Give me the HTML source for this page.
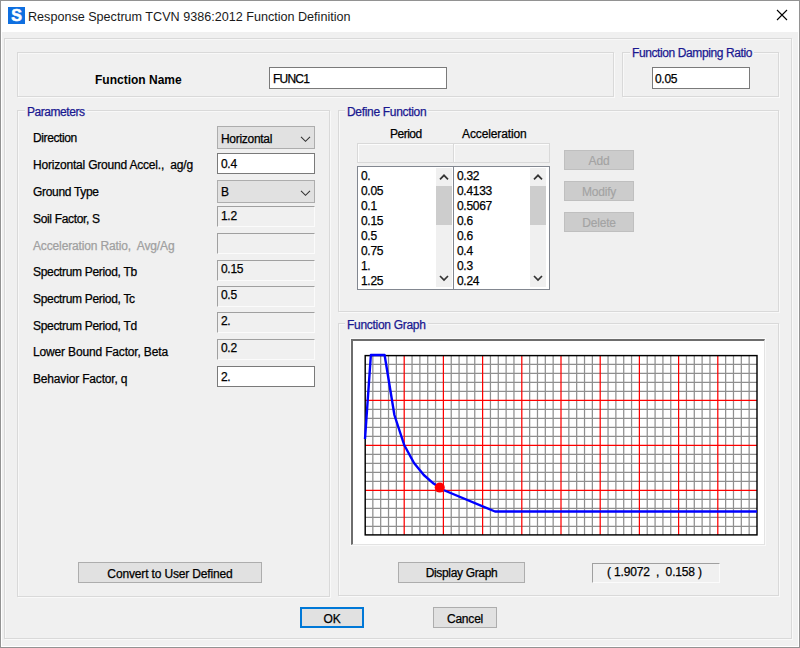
<!DOCTYPE html>
<html><head><meta charset="utf-8">
<style>
html,body{margin:0;padding:0;}
body{width:800px;height:648px;position:relative;overflow:hidden;background:#f0f0f0;font-family:"Liberation Sans",sans-serif;font-size:11px;color:#000;}
div,span{box-sizing:border-box;}
.a{position:absolute;}
.t{position:absolute;font-size:12px;line-height:13px;white-space:pre;letter-spacing:-0.3px;-webkit-text-stroke:0.25px currentColor;}
.win{left:0;top:0;width:800px;height:648px;border:1px solid #929292;background:#fff;}
.client{left:2px;top:32px;width:796px;height:614px;background:#f0f0f0;}
.etch{position:absolute;border:1px solid #d9d9d9;box-shadow:1px 1px 0 #f9f9f9, inset 1px 1px 0 #f8f8f8;}
.gt{position:absolute;font-size:12px;line-height:13px;white-space:pre;color:#1a1890;background:#f0f0f0;padding:0 2px;letter-spacing:-0.3px;-webkit-text-stroke:0.25px currentColor;}
.tb{position:absolute;background:#fff;border:1px solid #7a7a7a;}
.ro{position:absolute;background:#f0f0f0;border-top:1px solid #a0a0a0;border-left:1px solid #a0a0a0;border-right:1px solid #fbfbfb;border-bottom:1px solid #fbfbfb;}
.cb{position:absolute;background:#e1e1e1;border:1px solid #adadad;}
.btn{position:absolute;background:#e1e1e1;border:1px solid #adadad;text-align:center;font-size:12px;line-height:21px;white-space:pre;letter-spacing:-0.2px;-webkit-text-stroke:0.25px currentColor;}
.dis{background:#cccccc;border:1px solid #bfbfbf;color:#a3a3a3;-webkit-text-stroke:0.15px currentColor;}
</style></head><body>
<div class="a win"></div>
<div class="a client"></div>

<!-- title bar -->
<div class="a" style="left:8px;top:7px;width:17px;height:17px;background:#0f6fe0;"></div>
<div class="a" style="left:8px;top:6px;width:17px;height:17px;color:#fff;font-weight:bold;font-size:16px;line-height:20px;text-align:center;-webkit-text-stroke:0.6px #fff;">S</div>
<div class="t" style="left:28px;top:10px;-webkit-text-stroke:0;font-size:12.6px;line-height:15px;letter-spacing:0;color:#1a1a1a;">Response Spectrum TCVN 9386:2012 Function Definition</div>
<svg class="a" style="left:776px;top:9px" width="12" height="12" viewBox="0 0 12 12"><path d="M1 1L11 11M11 1L1 11" stroke="#000" stroke-width="1.1" fill="none"/></svg>

<!-- outer panel -->
<div class="etch" style="left:4px;top:38px;width:788px;height:601px;"></div>

<!-- Function name panel -->
<div class="etch" style="left:17px;top:52px;width:597px;height:45px;"></div>
<div class="t" style="left:95px;top:74px;font-size:12px;font-weight:bold;letter-spacing:0;-webkit-text-stroke:0;">Function Name</div>
<div class="tb" style="left:269px;top:67px;width:178px;height:22px;"></div>
<div class="t" style="left:273px;top:73px;letter-spacing:-0.8px;">FUNC1</div>

<!-- Damping -->
<div class="etch" style="left:622px;top:52px;width:157px;height:45px;"></div>
<div class="gt" style="left:630px;top:47px;letter-spacing:-0.4px;">Function Damping Ratio</div>
<div class="tb" style="left:652px;top:67px;width:98px;height:22px;"></div>
<div class="t" style="left:655px;top:73px;">0.05</div>

<!-- Parameters -->
<div class="etch" style="left:17px;top:110px;width:313px;height:487px;"></div>
<div class="gt" style="letter-spacing:-0.45px;left:25px;top:106px;">Parameters</div>

<div class="t" style="letter-spacing:-0.4px;left:33px;top:132px;">Direction</div>
<div class="t" style="letter-spacing:-0.2px;left:33px;top:159px;">Horizontal Ground Accel.,  ag/g</div>
<div class="t" style="letter-spacing:-0.32px;left:33px;top:186px;">Ground Type</div>
<div class="t" style="letter-spacing:-0.33px;left:33px;top:213px;">Soil Factor, S</div>
<div class="t" style="letter-spacing:-0.14px;left:33px;top:240px;color:#a0a0a0;">Acceleration Ratio,  Avg/Ag</div>
<div class="t" style="letter-spacing:-0.32px;left:33px;top:266px;">Spectrum Period, Tb</div>
<div class="t" style="letter-spacing:-0.32px;left:33px;top:293px;">Spectrum Period, Tc</div>
<div class="t" style="letter-spacing:-0.32px;left:33px;top:320px;">Spectrum Period, Td</div>
<div class="t" style="letter-spacing:-0.16px;left:33px;top:346px;">Lower Bound Factor, Beta</div>
<div class="t" style="letter-spacing:-0.17px;left:33px;top:373px;">Behavior Factor, q</div>

<div class="cb" style="left:217px;top:126px;width:98px;height:23px;"></div>
<div class="t" style="left:221px;top:133px;">Horizontal</div>
<svg class="a" style="left:300px;top:135px" width="11" height="8" viewBox="0 0 11 8"><path d="M1 1.8L5.5 6.3L10 1.8" stroke="#333" stroke-width="1.1" fill="none"/></svg>

<div class="tb" style="left:217px;top:153px;width:98px;height:21px;"></div>
<div class="t" style="left:221px;top:158px;">0.4</div>

<div class="cb" style="left:217px;top:180px;width:98px;height:23px;"></div>
<div class="t" style="left:221px;top:186px;">B</div>
<svg class="a" style="left:300px;top:189px" width="11" height="8" viewBox="0 0 11 8"><path d="M1 1.8L5.5 6.3L10 1.8" stroke="#333" stroke-width="1.1" fill="none"/></svg>

<div class="ro" style="left:217px;top:206px;width:98px;height:21px;"></div>
<div class="t" style="left:221px;top:210px;">1.2</div>
<div class="ro" style="left:217px;top:233px;width:98px;height:21px;"></div>
<div class="ro" style="left:217px;top:260px;width:98px;height:21px;"></div>
<div class="t" style="left:221px;top:263px;">0.15</div>
<div class="ro" style="left:217px;top:286px;width:98px;height:21px;"></div>
<div class="t" style="left:221px;top:289px;">0.5</div>
<div class="ro" style="left:217px;top:312px;width:98px;height:21px;"></div>
<div class="t" style="left:221px;top:315px;">2.</div>
<div class="ro" style="left:217px;top:339px;width:98px;height:21px;"></div>
<div class="t" style="left:221px;top:342px;">0.2</div>

<div class="tb" style="left:217px;top:366px;width:98px;height:21px;"></div>
<div class="t" style="left:221px;top:371px;">2.</div>

<div class="btn" style="letter-spacing:-0.15px;left:78px;top:562px;width:184px;height:21px;line-height:22px;">Convert to User Defined</div>

<!-- Define Function -->
<div class="etch" style="left:338px;top:110px;width:441px;height:202px;"></div>
<div class="gt" style="letter-spacing:-0.32px;left:345px;top:106px;">Define Function</div>

<div class="t" style="letter-spacing:-0.5px;left:390px;top:128px;">Period</div>
<div class="t" style="letter-spacing:-0.12px;left:462px;top:128px;">Acceleration</div>

<div class="a" style="left:357px;top:143px;width:97px;height:20px;border:1px solid #d9d9d9;box-shadow:inset 1px 1px 0 #fcfcfc;background:#f0f0f0;"></div>
<div class="a" style="left:453px;top:143px;width:97px;height:20px;border:1px solid #d9d9d9;box-shadow:inset 1px 1px 0 #fcfcfc;background:#f0f0f0;"></div>

<div class="a" style="left:357px;top:166px;width:97px;height:124px;border:1px solid #828790;background:#fff;"></div>
<div class="a" style="left:453px;top:166px;width:97px;height:124px;border:1px solid #828790;background:#fff;"></div>
<div class="a" style="left:436px;top:168px;width:16px;height:119px;background:#f0f0f0;"></div>
<div class="a" style="left:436px;top:186px;width:16px;height:39px;background:#cdcdcd;"></div>
<div class="a" style="left:530px;top:168px;width:16px;height:119px;background:#f0f0f0;"></div>
<div class="a" style="left:530px;top:186px;width:16px;height:39px;background:#cdcdcd;"></div>
<svg class="a" style="left:439px;top:173px" width="10" height="8" viewBox="0 0 10 8"><path d="M1 6.3L5 2.3L9 6.3" stroke="#333" stroke-width="1.7" fill="none"/></svg>
<svg class="a" style="left:439px;top:274px" width="10" height="8" viewBox="0 0 10 8"><path d="M1 2L5 6L9 2" stroke="#333" stroke-width="1.7" fill="none"/></svg>
<svg class="a" style="left:533px;top:173px" width="10" height="8" viewBox="0 0 10 8"><path d="M1 6.3L5 2.3L9 6.3" stroke="#333" stroke-width="1.7" fill="none"/></svg>
<svg class="a" style="left:533px;top:274px" width="10" height="8" viewBox="0 0 10 8"><path d="M1 2L5 6L9 2" stroke="#333" stroke-width="1.7" fill="none"/></svg>

<div class="t" style="left:361px;top:169px;line-height:15px;">0.
0.05
0.1
0.15
0.5
0.75
1.
1.25</div>
<div class="t" style="left:457px;top:169px;line-height:15px;">0.32
0.4133
0.5067
0.6
0.6
0.4
0.3
0.24</div>

<div class="btn dis" style="left:564px;top:150px;width:70px;height:20px;line-height:20px;">Add</div>
<div class="btn dis" style="left:564px;top:181px;width:70px;height:20px;line-height:20px;">Modify</div>
<div class="btn dis" style="left:564px;top:212px;width:70px;height:20px;line-height:20px;">Delete</div>

<!-- Function Graph -->
<div class="etch" style="left:338px;top:323px;width:441px;height:273px;"></div>
<div class="gt" style="letter-spacing:-0.3px;left:345px;top:319px;">Function Graph</div>
<div class="a" style="left:350px;top:338px;width:416px;height:208px;border:1px solid #f9f9f9;"></div><div class="a" style="left:351px;top:339px;width:414px;height:206px;background:#fff;border-top:2px solid #6d6d6d;border-left:2px solid #6d6d6d;border-right:1px solid #e3e3e3;border-bottom:1px solid #e3e3e3;"></div>
<!--GRAPH--><svg class="a" style="left:0;top:0" width="800" height="648" viewBox="0 0 800 648">
<g stroke="#8f8f8f" stroke-width="1.25" fill="none"><line x1="372.84" y1="355" x2="372.84" y2="535"/><line x1="380.68" y1="355" x2="380.68" y2="535"/><line x1="388.52" y1="355" x2="388.52" y2="535"/><line x1="396.36" y1="355" x2="396.36" y2="535"/><line x1="412.04" y1="355" x2="412.04" y2="535"/><line x1="419.88" y1="355" x2="419.88" y2="535"/><line x1="427.72" y1="355" x2="427.72" y2="535"/><line x1="435.56" y1="355" x2="435.56" y2="535"/><line x1="451.24" y1="355" x2="451.24" y2="535"/><line x1="459.08" y1="355" x2="459.08" y2="535"/><line x1="466.92" y1="355" x2="466.92" y2="535"/><line x1="474.76" y1="355" x2="474.76" y2="535"/><line x1="490.44" y1="355" x2="490.44" y2="535"/><line x1="498.28" y1="355" x2="498.28" y2="535"/><line x1="506.12" y1="355" x2="506.12" y2="535"/><line x1="513.96" y1="355" x2="513.96" y2="535"/><line x1="529.64" y1="355" x2="529.64" y2="535"/><line x1="537.48" y1="355" x2="537.48" y2="535"/><line x1="545.32" y1="355" x2="545.32" y2="535"/><line x1="553.16" y1="355" x2="553.16" y2="535"/><line x1="568.84" y1="355" x2="568.84" y2="535"/><line x1="576.68" y1="355" x2="576.68" y2="535"/><line x1="584.52" y1="355" x2="584.52" y2="535"/><line x1="592.36" y1="355" x2="592.36" y2="535"/><line x1="608.04" y1="355" x2="608.04" y2="535"/><line x1="615.88" y1="355" x2="615.88" y2="535"/><line x1="623.72" y1="355" x2="623.72" y2="535"/><line x1="631.56" y1="355" x2="631.56" y2="535"/><line x1="647.24" y1="355" x2="647.24" y2="535"/><line x1="655.08" y1="355" x2="655.08" y2="535"/><line x1="662.92" y1="355" x2="662.92" y2="535"/><line x1="670.76" y1="355" x2="670.76" y2="535"/><line x1="686.44" y1="355" x2="686.44" y2="535"/><line x1="694.28" y1="355" x2="694.28" y2="535"/><line x1="702.12" y1="355" x2="702.12" y2="535"/><line x1="709.96" y1="355" x2="709.96" y2="535"/><line x1="725.64" y1="355" x2="725.64" y2="535"/><line x1="733.48" y1="355" x2="733.48" y2="535"/><line x1="741.32" y1="355" x2="741.32" y2="535"/><line x1="749.16" y1="355" x2="749.16" y2="535"/><line x1="365" y1="364.25" x2="757" y2="364.25"/><line x1="365" y1="373.25" x2="757" y2="373.25"/><line x1="365" y1="382.25" x2="757" y2="382.25"/><line x1="365" y1="391.25" x2="757" y2="391.25"/><line x1="365" y1="409.25" x2="757" y2="409.25"/><line x1="365" y1="418.25" x2="757" y2="418.25"/><line x1="365" y1="427.25" x2="757" y2="427.25"/><line x1="365" y1="436.25" x2="757" y2="436.25"/><line x1="365" y1="454.25" x2="757" y2="454.25"/><line x1="365" y1="463.25" x2="757" y2="463.25"/><line x1="365" y1="472.25" x2="757" y2="472.25"/><line x1="365" y1="481.25" x2="757" y2="481.25"/><line x1="365" y1="499.25" x2="757" y2="499.25"/><line x1="365" y1="508.25" x2="757" y2="508.25"/><line x1="365" y1="517.25" x2="757" y2="517.25"/><line x1="365" y1="526.25" x2="757" y2="526.25"/></g>
<g stroke="#ff0000" stroke-width="1.25" fill="none"><line x1="404.2" y1="355" x2="404.2" y2="535"/><line x1="443.4" y1="355" x2="443.4" y2="535"/><line x1="482.6" y1="355" x2="482.6" y2="535"/><line x1="521.8" y1="355" x2="521.8" y2="535"/><line x1="561.0" y1="355" x2="561.0" y2="535"/><line x1="600.2" y1="355" x2="600.2" y2="535"/><line x1="639.4" y1="355" x2="639.4" y2="535"/><line x1="678.6" y1="355" x2="678.6" y2="535"/><line x1="717.8" y1="355" x2="717.8" y2="535"/><line x1="365" y1="400.25" x2="757" y2="400.25"/><line x1="365" y1="445.25" x2="757" y2="445.25"/><line x1="365" y1="490.25" x2="757" y2="490.25"/></g>
<rect x="365.2" y="355.6" width="391.8" height="179.3" fill="none" stroke="#000" stroke-width="1.45"/>
<polyline points="365.00,439.00 366.96,411.01 368.92,382.99 370.88,355.00 384.60,355.00 394.40,415.00 404.20,445.00 414.00,463.00 423.80,475.00 433.60,483.57 443.40,490.00 495.00,511.50 757.00,511.50" fill="none" stroke="#0000ff" stroke-width="2.4" stroke-linejoin="round"/>
<circle cx="439.76" cy="487.60" r="5" fill="#ff0000"/>
</svg><!--/GRAPH-->

<div class="btn" style="letter-spacing:-0.33px;left:398px;top:562px;width:127px;height:21px;">Display Graph</div>
<div class="ro" style="left:592px;top:563px;width:128px;height:20px;"></div>
<div class="t" style="letter-spacing:-0.16px;left:607px;top:566px;">( 1.9072  ,  0.158 )</div>

<!-- OK / Cancel -->
<div class="btn" style="left:300px;top:607px;width:64px;height:21px;border:2px solid #0078d7;line-height:20px;">OK</div>
<div class="btn" style="left:433px;top:607px;width:64px;height:21px;line-height:22px;">Cancel</div>

</body></html>
